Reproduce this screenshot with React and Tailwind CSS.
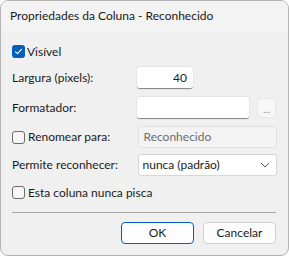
import React from 'react';

const font = { fontFamily: '"Segoe UI", Lato, "Noto Sans", sans-serif' };

function Check({ checked }) {
  if (checked) {
    return (
      <span className="flex h-[13px] w-[13px] items-center justify-center rounded-[3px] bg-[#005fb8]">
        <svg width="9" height="9" viewBox="0 0 9 9" fill="none">
          <path d="M1.5 4.8 L3.5 6.7 L7.5 2.3" stroke="white" strokeWidth="1.1" strokeLinecap="round" strokeLinejoin="round" />
        </svg>
      </span>
    );
  }
  return <span className="block h-[13px] w-[13px] rounded-[3px] border border-[#6b6b6b] bg-[#f6f6f6]" />;
}

export default function App() {
  return (
    <div className="h-[256px] w-[289px] bg-white" style={font}>
      <div className="flex h-[256px] w-[289px] flex-col overflow-hidden rounded-[8px] border border-[#b4b4b4] bg-[#f0f0f0] text-[12px] text-[#1b1b1b]">
        <div className="flex h-[30px] shrink-0 items-center bg-[#f3f3f3] pl-[9px] text-[12px] text-[#1a1a1a]">
          Propriedades da Coluna - Reconhecido
        </div>
        <div className="flex flex-col pl-[11px] pr-[11px]">
          <label className="mt-[14px] flex h-[13px] items-center gap-[2px]">
            <Check checked />
            <span>Visível</span>
          </label>

          <div className="mt-[9px] flex h-[22px] items-center">
            <span className="w-[125px]">Largura (pixels):</span>
            <div className="flex h-[22px] w-[56px] items-center justify-end rounded-[3px] border-b border-[#8a8a8a] bg-white pr-[6px] shadow-[0_0_0_1px_#e5e5e5]">
              40
            </div>
          </div>

          <div className="mt-[8px] flex h-[22px] items-center">
            <span className="w-[125px]">Formatador:</span>
            <div className="h-[22px] w-[112px] rounded-[3px] border-b border-[#8a8a8a] bg-white shadow-[0_0_0_1px_#e5e5e5]" />
            <div className="ml-[8px] flex h-[20px] w-[19px] items-end justify-center rounded-[4px] border border-[#e6e6e6] bg-[#f7f7f7] pb-[3px] text-[10px] leading-none text-[#8a8a8a]">
              ...
            </div>
          </div>

          <div className="mt-[7px] flex h-[22px] items-center">
            <label className="flex w-[126px] items-center gap-[3px]">
              <Check />
              <span>Renomear para:</span>
            </label>
            <div className="flex h-[22px] w-[140px] items-center rounded-[3px] border border-[#e0e0e0] bg-[#f3f3f3] pl-[5px] text-[#6e6e6e]">
              Reconhecido
            </div>
          </div>

          <div className="mt-[6px] flex h-[22px] items-center">
            <span className="w-[126px]">Permite reconhecer:</span>
            <div className="flex h-[22px] w-[140px] items-center justify-between rounded-[3px] border border-[#d6d6d6] bg-white pl-[4px] pr-[6px]">
              <span>nunca (padrão)</span>
              <svg width="10" height="6" viewBox="0 0 10 6" fill="none">
                <path d="M1 1 L5 5 L9 1" stroke="#555" strokeWidth="1" />
              </svg>
            </div>
          </div>

          <label className="mt-[10px] flex h-[13px] items-center gap-[3px]">
            <Check />
            <span>Esta coluna nunca pisca</span>
          </label>

          <div className="mt-[13px] h-px w-[264px] bg-[#a8a8a8]" />

          <div className="mt-[9px] flex justify-end gap-[9px] pr-[1px]">
            <button className="h-[22px] w-[73px] rounded-[4px] border border-[#005fb8] bg-[#fdfdfd] text-[12px]">OK</button>
            <button className="h-[22px] w-[73px] rounded-[4px] border border-[#d0d0d0] bg-[#fdfdfd] text-[12px]">Cancelar</button>
          </div>
        </div>
      </div>
    </div>
  );
}
